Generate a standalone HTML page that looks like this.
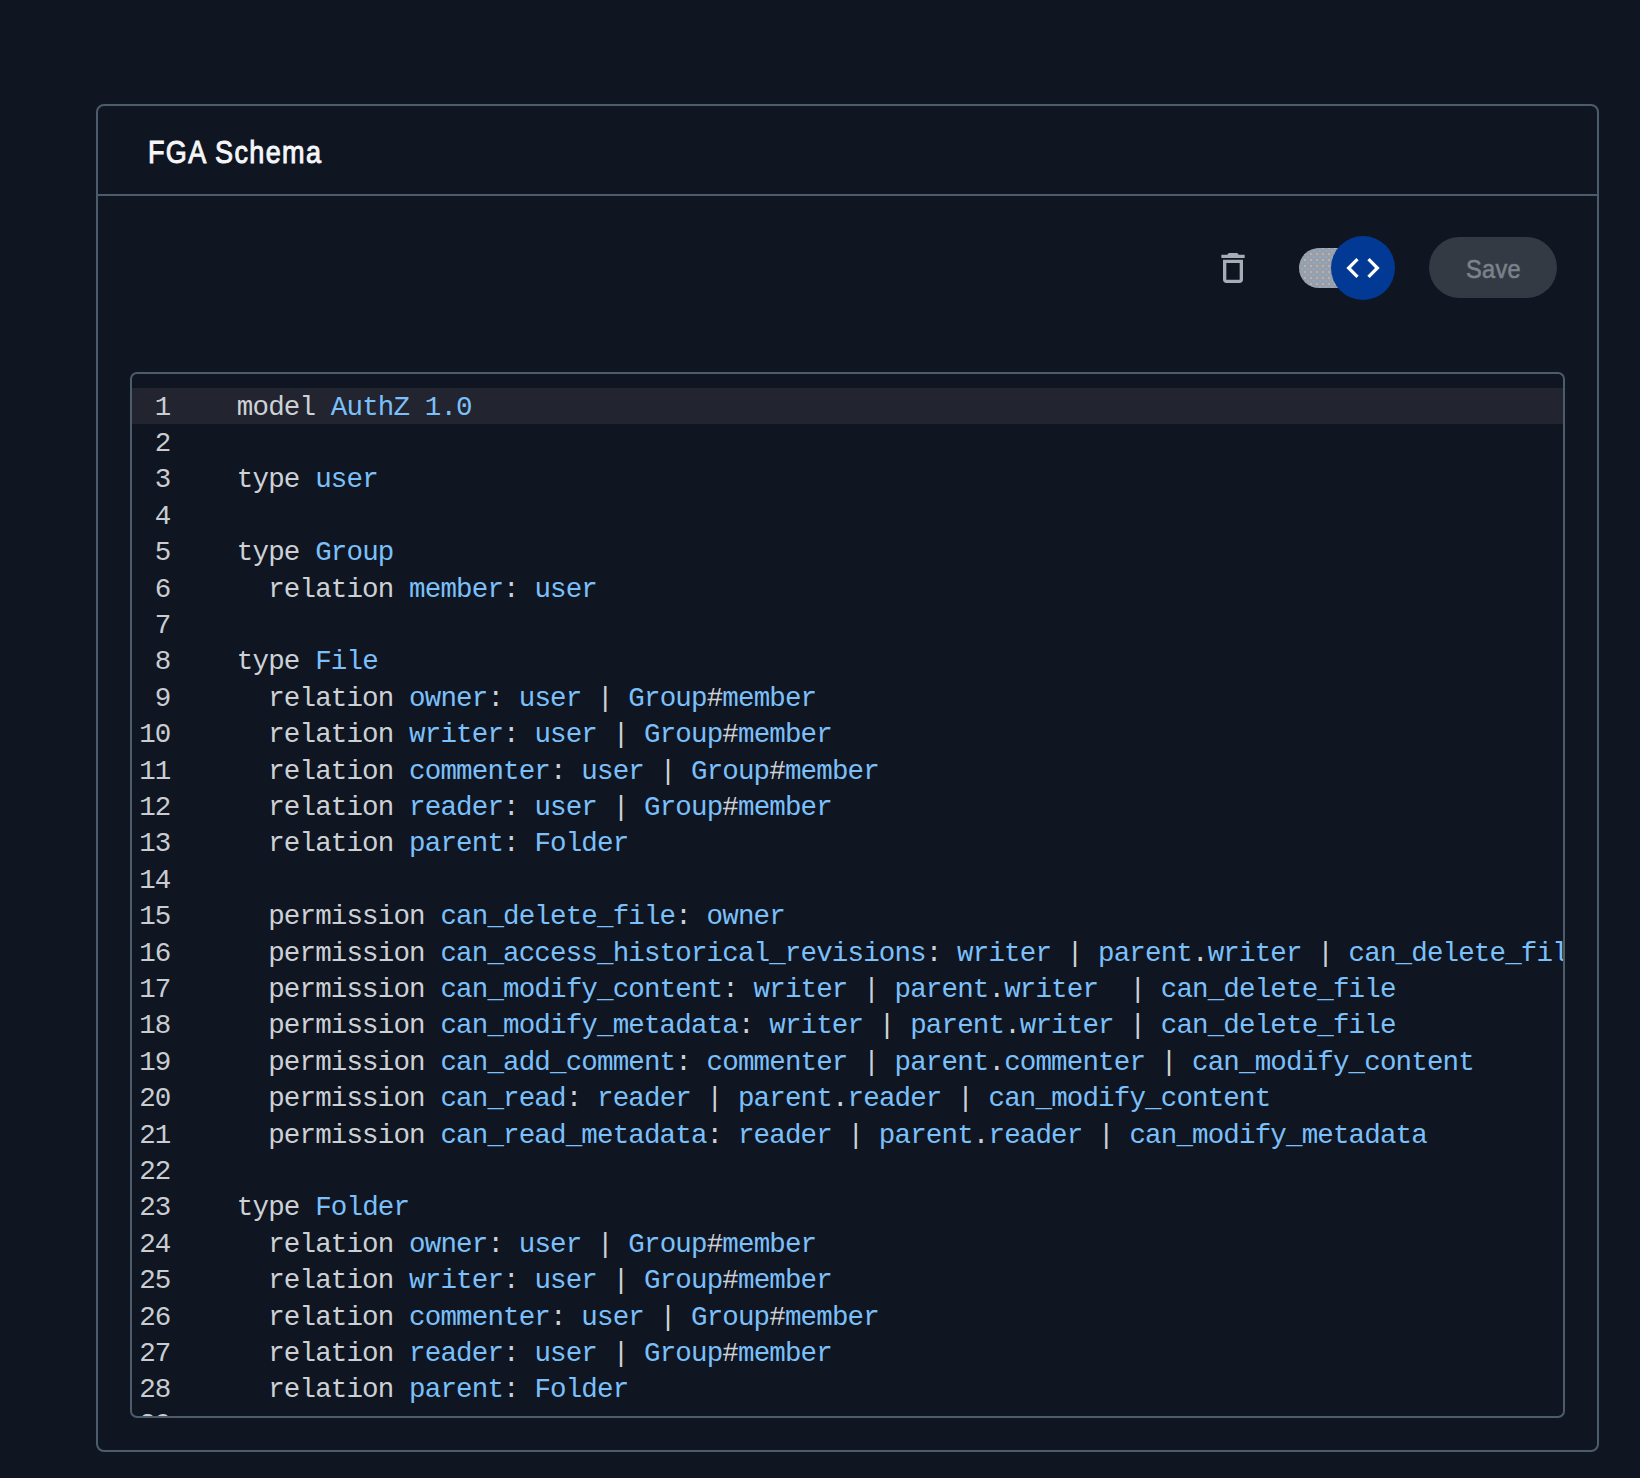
<!DOCTYPE html>
<html>
<head>
<meta charset="utf-8">
<style>
html,body{margin:0;padding:0;}
body{width:1640px;height:1478px;background:#0f1521;position:relative;overflow:hidden;font-family:"Liberation Sans",sans-serif;}
.card{position:absolute;left:96px;top:104px;width:1499px;height:1344px;border:2px solid #4c5c6b;border-radius:8px;background:#0f1521;}
.title{position:absolute;left:147.5px;top:131.8px;height:40px;font-weight:normal;font-size:32px;line-height:40px;color:#f4f6f8;-webkit-text-stroke:1px #f4f6f8;letter-spacing:1.6px;white-space:nowrap;transform-origin:0 50%;transform:scaleX(0.845);}
.sep{position:absolute;left:98px;top:194px;width:1499px;height:2px;background:#4c5c6b;}
.trash{position:absolute;left:1213px;top:248px;width:40px;height:40px;}
.track{position:absolute;left:1299px;top:248px;width:80px;height:40px;border-radius:20px;background-color:#9a9fa7;background-image:radial-gradient(circle at 50% 50%,#7fb0e0 0.6px,transparent 1px),radial-gradient(circle at 50% 50%,#b9bcc1 0.6px,transparent 1px);background-size:6px 6px,6px 6px;background-position:0 0,3px 3px;}
.knob{position:absolute;left:1331px;top:236px;width:64px;height:64px;border-radius:50%;background:#013994;}
.codeic{position:absolute;left:1343px;top:248px;width:40px;height:40px;}
.save{position:absolute;left:1429px;top:237px;width:128px;height:61px;border-radius:31px;background:#333a44;}
.savet{position:absolute;left:1466px;top:254px;height:30px;line-height:30px;font-weight:normal;font-size:26.5px;-webkit-text-stroke:0.6px #7b828b;color:#7b828b;white-space:nowrap;transform-origin:0 50%;transform:scaleX(0.89);letter-spacing:0.3px;}
.editor{position:absolute;left:130px;top:372px;width:1431px;height:1042px;border:2px solid #4c5c6b;border-radius:7px;background:#0f1521;overflow:hidden;}
.active{position:absolute;left:0;top:14px;width:100%;height:36.4px;background:#22242f;}
.gut{position:absolute;left:0;top:15.5px;width:38.5px;font-family:"Liberation Mono",monospace;font-size:27.5px;letter-spacing:-0.8455px;line-height:36.4px;color:#c9cdd2;text-align:right;white-space:pre;}
.code{position:absolute;left:104.86px;top:15.5px;font-family:"Liberation Mono",monospace;font-size:27.5px;letter-spacing:-0.8455px;line-height:36.4px;color:#cdd1d6;white-space:pre;}
.b{color:#7bc0fa;}
</style>
</head>
<body>
<div class="card"></div>
<div class="title">FGA Schema</div>
<div class="sep"></div>
<svg class="trash" viewBox="0 0 24 24"><path fill="#a6adb5" d="M6 19c0 1.1.9 2 2 2h8c1.1 0 2-.9 2-2V7H6v12zM8 9h8v10H8V9zm7.5-5l-1-1h-5l-1 1H5v2h14V4z"/></svg>
<div class="track"></div>
<div class="knob"></div>
<svg class="codeic" viewBox="0 0 24 24"><path fill="#ffffff" d="M9.4 16.6L4.8 12l4.6-4.6L8 6l-6 6 6 6 1.4-1.4zm5.2 0l4.6-4.6-4.6-4.6L16 6l6 6-6 6-1.4-1.4z"/></svg>
<div class="save"></div>
<div class="savet">Save</div>
<div class="editor">
<div class="active"></div>
<div class="gut">1
2
3
4
5
6
7
8
9
10
11
12
13
14
15
16
17
18
19
20
21
22
23
24
25
26
27
28
<span style="position:relative;top:-2px">29</span></div>
<div class="code">model <span class="b">AuthZ 1.0</span>

type <span class="b">user</span>

type <span class="b">Group</span>
  relation <span class="b">member</span>: <span class="b">user</span>

type <span class="b">File</span>
  relation <span class="b">owner</span>: <span class="b">user</span> | <span class="b">Group</span>#<span class="b">member</span>
  relation <span class="b">writer</span>: <span class="b">user</span> | <span class="b">Group</span>#<span class="b">member</span>
  relation <span class="b">commenter</span>: <span class="b">user</span> | <span class="b">Group</span>#<span class="b">member</span>
  relation <span class="b">reader</span>: <span class="b">user</span> | <span class="b">Group</span>#<span class="b">member</span>
  relation <span class="b">parent</span>: <span class="b">Folder</span>

  permission <span class="b">can_delete_file</span>: <span class="b">owner</span>
  permission <span class="b">can_access_historical_revisions</span>: <span class="b">writer</span> | <span class="b">parent</span>.<span class="b">writer</span> | <span class="b">can_delete_file</span>
  permission <span class="b">can_modify_content</span>: <span class="b">writer</span> | <span class="b">parent</span>.<span class="b">writer</span>  | <span class="b">can_delete_file</span>
  permission <span class="b">can_modify_metadata</span>: <span class="b">writer</span> | <span class="b">parent</span>.<span class="b">writer</span> | <span class="b">can_delete_file</span>
  permission <span class="b">can_add_comment</span>: <span class="b">commenter</span> | <span class="b">parent</span>.<span class="b">commenter</span> | <span class="b">can_modify_content</span>
  permission <span class="b">can_read</span>: <span class="b">reader</span> | <span class="b">parent</span>.<span class="b">reader</span> | <span class="b">can_modify_content</span>
  permission <span class="b">can_read_metadata</span>: <span class="b">reader</span> | <span class="b">parent</span>.<span class="b">reader</span> | <span class="b">can_modify_metadata</span>

type <span class="b">Folder</span>
  relation <span class="b">owner</span>: <span class="b">user</span> | <span class="b">Group</span>#<span class="b">member</span>
  relation <span class="b">writer</span>: <span class="b">user</span> | <span class="b">Group</span>#<span class="b">member</span>
  relation <span class="b">commenter</span>: <span class="b">user</span> | <span class="b">Group</span>#<span class="b">member</span>
  relation <span class="b">reader</span>: <span class="b">user</span> | <span class="b">Group</span>#<span class="b">member</span>
  relation <span class="b">parent</span>: <span class="b">Folder</span>
</div>
</div>
</body>
</html>
